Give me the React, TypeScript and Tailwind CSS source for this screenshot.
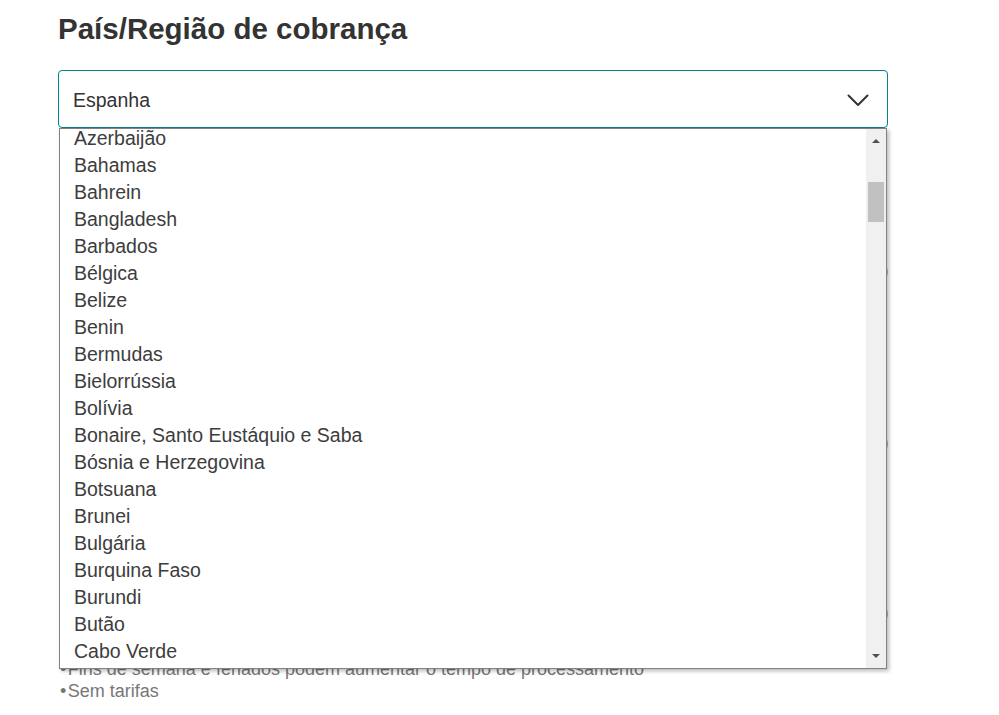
const countries = [
  "Azerbaijão",
  "Bahamas",
  "Bahrein",
  "Bangladesh",
  "Barbados",
  "Bélgica",
  "Belize",
  "Benin",
  "Bermudas",
  "Bielorrússia",
  "Bolívia",
  "Bonaire, Santo Eustáquio e Saba",
  "Bósnia e Herzegovina",
  "Botsuana",
  "Brunei",
  "Bulgária",
  "Burquina Faso",
  "Burundi",
  "Butão",
  "Cabo Verde",
  "Camarões",
];

function Chevron() {
  return (
    <svg width="22" height="13" viewBox="0 0 22 13" fill="none">
      <path d="M1.5 1.5 L11 11 L20.5 1.5" stroke="#333" strokeWidth="2" strokeLinecap="round" strokeLinejoin="round" />
    </svg>
  );
}

export default function App() {
  return (
    <div className="min-h-[715px] bg-white pl-[58px] pt-[11px] font-['Liberation_Sans',Arial,sans-serif]">
      <h2 className="text-[29.5px] leading-[36px] font-bold text-[#333]">País/Região de cobrança</h2>

      <div className="relative mt-[23px] w-[830px]">
        {/* select */}
        <div className="flex h-[58px] items-center justify-between rounded-[4px] border border-[#00838f] pl-[14px] pr-[18px] pt-[3px]">
          <span className="text-[19.5px] text-[#333]">Espanha</span>
          <Chevron />
        </div>

        {/* content underneath */}
        <div className="flex h-[530px] flex-col items-end">
          <div className="mt-[134px] h-[20px] w-[20px] rounded-full border border-[#aaa]" />
          <div className="mt-[152px] h-[20px] w-[20px] rounded-full border border-[#aaa]" />
          <div className="mt-[150px] h-[20px] w-[20px] rounded-full border border-[#aaa]" />
        </div>
        <div className="text-[18px] leading-[22px] text-[#777]">
          <p className="pl-[2px]">•&#8202;Fins de semana e feriados podem aumentar o tempo de processamento</p>
          <p className="pl-[2px]">•&#8202;Sem tarifas</p>
        </div>

        {/* open list */}
        <div className="absolute left-[1px] top-[58px] flex h-[541px] w-[828px] border border-[#828282] bg-white shadow-[2px_2px_4px_rgba(0,0,0,0.28)]">
          <div className="flex-1 overflow-hidden">
            <ul className="-mt-[4px] text-[19.5px] text-[#3d3d3d]">
              {countries.map((c) => (
                <li key={c} className="h-[27px] pl-[14px] leading-[27px]">
                  {c}
                </li>
              ))}
            </ul>
          </div>
          <div className="flex w-[20px] flex-col items-center bg-[#f0f0f0]">
            <div className="mt-[10px] h-0 w-0 border-x-[4px] border-b-[4px] border-x-transparent border-b-[#505050]" />
            <div className="mt-[39px] h-[40px] w-[16px] bg-[#c1c1c1]" />
            <div className="flex-1" />
            <div className="mb-[10px] h-0 w-0 border-x-[4px] border-t-[4px] border-x-transparent border-t-[#505050]" />
          </div>
        </div>
      </div>
    </div>
  );
}
